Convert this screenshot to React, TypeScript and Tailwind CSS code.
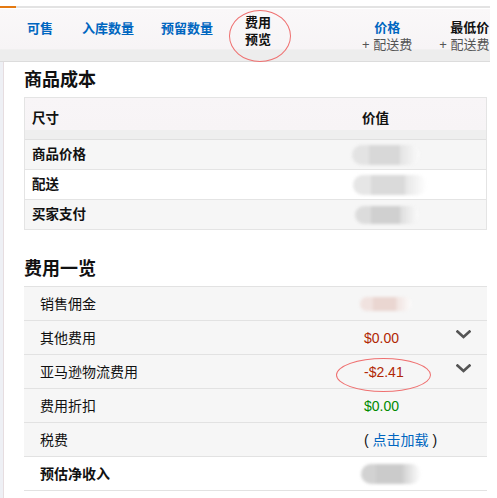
import React from "react";

const FONT = { fontFamily: '"Liberation Sans", "Noto Sans CJK SC", sans-serif' };

function Blur({ w, h, ml, color, mid }: { w: number; h: number; ml: number; color: string; mid: string }) {
  return (
    <div
      className="rounded-full blur-[1.5px]"
      style={{
        width: w,
        height: h,
        marginLeft: ml,
        background: `linear-gradient(90deg, ${color} 0%, ${color} 25%, ${mid} 25%, ${mid} 70%, ${color} 70%, rgba(255,255,255,0.6) 100%)`,
      }}
    />
  );
}

function Chevron() {
  return (
    <svg width="15" height="9" viewBox="0 0 15 9" className="block">
      <path d="M1.5 1.5 L7.5 7 L13.5 1.5" fill="none" stroke="#555" strokeWidth="2.6" strokeLinecap="square" />
    </svg>
  );
}

export default function App() {
  return (
    <div className="relative w-[497px] h-[498px] overflow-hidden bg-white text-[#111]" style={FONT}>
      <div className="w-[490px]">
        {/* top strip */}
        <div className="h-[6px] bg-white" />
        <div className="flex h-[2px]">
          <div className="w-[16px] bg-[#e47911]" />
          <div className="flex-1 bg-[#e3e3e3]" />
        </div>
        <div className="h-[1px] bg-white" />
        {/* header nav */}
        <div className="relative flex h-[53px] items-start overflow-hidden whitespace-nowrap border-b border-[#dcdcdc] bg-[linear-gradient(#faf8f9_0%,#f7f4f6_76%,#ededed_79%,#ededed_100%)] text-[13px] font-bold leading-[17px]">
          <div className="ml-[27px] mt-[11px] shrink-0 text-[#0066c0]">可售</div>
          <div className="ml-[29px] mt-[11px] shrink-0 text-[#0066c0]">入库数量</div>
          <div className="ml-[27px] mt-[11px] shrink-0 text-[#0066c0]">预留数量</div>
          <div className="ml-[32px] mt-[5px] flex shrink-0 flex-col text-[#111]">
            <span>费用</span>
            <span>预览</span>
          </div>
          <div className="ml-[91px] mt-[10px] flex shrink-0 flex-col items-center">
            <span className="text-[#0066c0]">价格</span>
            <span className="font-normal text-[#555]">+ 配送费</span>
          </div>
          <div className="ml-[27px] mt-[10px] flex shrink-0 flex-col items-start">
            <span className="ml-[11px] text-[#111]">最低价</span>
            <span className="font-normal text-[#555]">+ 配送费</span>
          </div>
        </div>
      </div>
      <div className="absolute left-[229px] top-[10px] h-[52px] w-[62px] rounded-[50%] border-[1.5px] border-[#ef7070]" />

      {/* body */}
      <div className="flex">
        <div className="h-[436px] w-[4px] shrink-0 border-r border-[#e6dde0] bg-[#eef0f5]" />
        <div className="flex-1 pl-[20px] pr-[10px]">
          <div className="mt-[6px] h-[29px] text-[18px] font-bold leading-[24px]">商品成本</div>
          {/* table 1 */}
          <div className="border border-[#e4e4e4] text-[13.5px] font-bold leading-[14px]">
            <div className="flex h-[42px] items-start border-b border-[#e0e0e0] bg-[linear-gradient(#f8f5f7_0%,#f7f4f6_78%,#efefef_79%,#efefef_100%)] pt-[14px]">
              <div className="flex-1 pl-[7px]">尺寸</div>
              <div className="w-[133px] pl-[9px]">价值</div>
            </div>
            <div className="flex h-[30px] items-center border-b border-[#e4e4e4] bg-[#f6f6f6]">
              <div className="flex-1 pl-[7px]">商品价格</div>
              <div className="w-[133px]">
                <Blur w={68} h={20} ml={-1} color="#e3e3e3" mid="#d8d8d8" />
              </div>
            </div>
            <div className="flex h-[30px] items-center border-b border-[#e4e4e4] bg-white">
              <div className="flex-1 pl-[7px]">配送</div>
              <div className="w-[133px]">
                <Blur w={74} h={20} ml={0} color="#e6e6e6" mid="#dadada" />
              </div>
            </div>
            <div className="flex h-[29px] items-center bg-[#f6f6f6]">
              <div className="flex-1 pl-[7px]">买家支付</div>
              <div className="w-[133px]">
                <Blur w={64} h={18} ml={2} color="#dcdcdc" mid="#d0d0d0" />
              </div>
            </div>
          </div>

          <div className="mt-[27px] h-[29px] text-[18px] font-bold leading-[24px]">费用一览</div>
          {/* table 2 */}
          <div className="text-[14px] leading-[16px]">
            <div className="flex h-[34px] items-center border-t border-[#e2e2e2] bg-[#f6f6f6]">
              <div className="flex-1 pl-[16px]">销售佣金</div>
              <div className="w-[123px]">
                <Blur w={52} h={14} ml={-4} color="#f0e2df" mid="#ead6d1" />
              </div>
            </div>
            <div className="relative flex h-[34px] items-center border-t border-[#e2e2e2] bg-[#f6f6f6]">
              <div className="flex-1 pl-[16px]">其他费用</div>
              <div className="w-[123px] text-[#b12704]">$0.00</div>
              <div className="absolute left-[432px] top-[9px]">
                <Chevron />
              </div>
            </div>
            <div className="relative flex h-[34px] items-center border-t border-[#e2e2e2] bg-[#f6f6f6]">
              <div className="flex-1 pl-[16px]">亚马逊物流费用</div>
              <div className="w-[123px] text-[#b12704]">-$2.41</div>
              <div className="absolute left-[432px] top-[9px]">
                <Chevron />
              </div>
              <div className="absolute left-[312px] top-[3px] h-[34px] w-[95px] rounded-[50%] border-[1.5px] border-[#ef7070]" />
            </div>
            <div className="flex h-[34px] items-center border-t border-[#e2e2e2] bg-[#f6f6f6]">
              <div className="flex-1 pl-[16px]">费用折扣</div>
              <div className="w-[123px] text-[#008a00]">$0.00</div>
            </div>
            <div className="flex h-[34px] items-center border-t border-[#e2e2e2] bg-[#f6f6f6]">
              <div className="flex-1 pl-[16px]">税费</div>
              <div className="w-[123px] whitespace-nowrap">
                ( <span className="text-[#0066c0]">点击加载</span> )
              </div>
            </div>
            <div className="flex h-[35px] items-center border-y border-[#e2e2e2] bg-white">
              <div className="flex-1 pl-[16px] font-bold">预估净收入</div>
              <div className="w-[123px]">
                <Blur w={60} h={20} ml={-3} color="#d2d2d2" mid="#cbcbcb" />
              </div>
            </div>
          </div>
        </div>
      </div>
    </div>
  );
}
